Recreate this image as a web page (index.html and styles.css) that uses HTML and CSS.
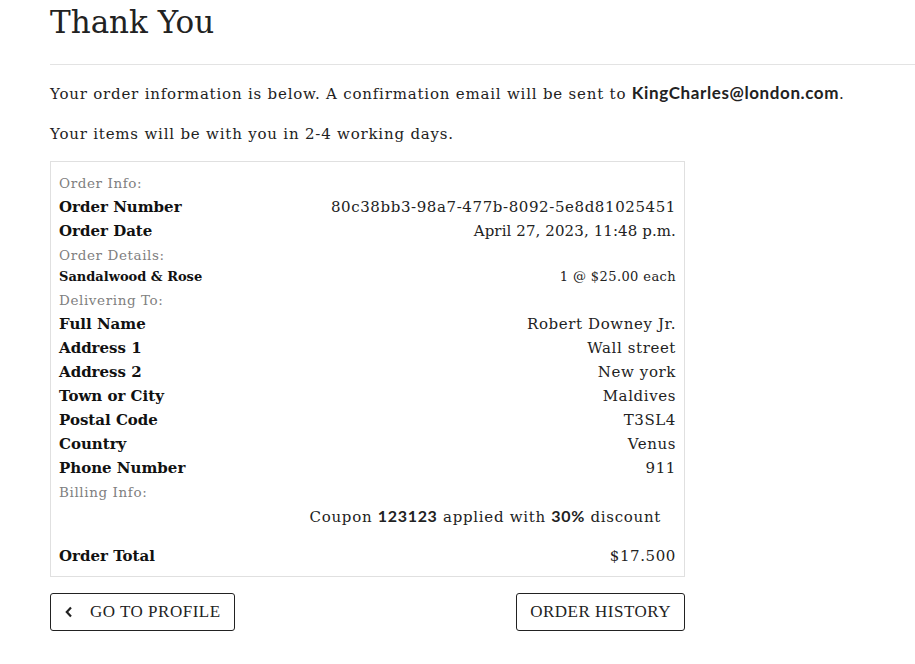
FILE: index.html
```html
<!DOCTYPE html>
<html lang="en">
<head>
<meta charset="utf-8">
<title>Thank You</title>
<link rel="stylesheet" href="styles.css">
</head>
<body>
<main class="page">
  <h1 class="title">Thank You</h1>
  <hr class="rule">
  <p class="lead">Your order information is below. A confirmation email will be sent to <strong>KingCharles@london.com</strong>.</p>
  <p class="lead">Your items will be with you in 2-4 working days.</p>

  <section class="order">
    <div class="section-label">Order Info:</div>
    <div class="row"><span class="label">Order Number</span><span class="value">80c38bb3-98a7-477b-8092-5e8d81025451</span></div>
    <div class="row"><span class="label">Order Date</span><span class="value value-date">April 27, 2023, 11:48 p.m.</span></div>

    <div class="section-label">Order Details:</div>
    <div class="row row-small"><span class="label">Sandalwood &amp; Rose</span><span class="value">1 @ $25.00 each</span></div>

    <div class="section-label">Delivering To:</div>
    <div class="row"><span class="label">Full Name</span><span class="value">Robert Downey Jr.</span></div>
    <div class="row"><span class="label">Address 1</span><span class="value">Wall street</span></div>
    <div class="row"><span class="label">Address 2</span><span class="value">New york</span></div>
    <div class="row"><span class="label">Town or City</span><span class="value">Maldives</span></div>
    <div class="row"><span class="label">Postal Code</span><span class="value">T3SL4</span></div>
    <div class="row"><span class="label">Country</span><span class="value">Venus</span></div>
    <div class="row"><span class="label">Phone Number</span><span class="value">911</span></div>

    <div class="section-label">Billing Info:</div>
    <div class="coupon">Coupon <strong>123123</strong> applied with <strong>30%</strong> discount</div>
    <div class="row row-total"><span class="label">Order Total</span><span class="value">$17.500</span></div>
  </section>

  <div class="actions">
    <a class="btn btn-back" href="#"><svg class="chev" width="10" height="12" viewBox="0 0 10 12"><path d="M7 1.5 L2.8 6 L7 10.5" fill="none" stroke="#222" stroke-width="2.2"/></svg><span>GO TO PROFILE</span></a>
    <a class="btn" href="#">ORDER HISTORY</a>
  </div>
</main>
</body>
</html>
```

FILE: styles.css
```css
html, body {
  margin: 0;
  padding: 0;
  background: #fff;
}
body {
  font-family: "DejaVu Serif", serif;
  color: #222;
  font-size: 15px;
}
.page {
  padding-left: 50px;
}
.title {
  font-family: "DejaVu Serif", serif;
  font-weight: normal;
  font-size: 31px;
  margin: 0;
  padding-top: 4px;
  line-height: 36px;
  color: #222;
}
.rule {
  border: 0;
  border-top: 1px solid #e3e3e3;
  margin: 24px 0 0 0;
}
.lead {
  margin: 17px 0 0 0;
  line-height: 22px;
  letter-spacing: 0.8px;
}
.lead + .lead {
  margin-top: 18px;
}
.lead strong {
  font-family: "Lato", sans-serif;
  font-weight: 700;
  font-size: 17px;
  letter-spacing: 0.6px;
}
.order {
  width: 617px;
  margin-top: 16px;
  border: 1px solid #e0e0e0;
  padding: 9px 8px 8px 8px;
}
.section-label {
  color: #808080;
  font-size: 13.5px;
  line-height: 24px;
  letter-spacing: 0.6px;
}
.row {
  display: flex;
  justify-content: space-between;
  align-items: baseline;
  line-height: 24px;
}
.label {
  font-weight: bold;
  font-size: 15px;
  color: #111;
}
.value {
  font-size: 15px;
  letter-spacing: 0.6px;
}
.value-date {
  letter-spacing: 0.1px;
}
.row-small {
  line-height: 18px;
  margin-top: 1px;
  margin-bottom: 2px;
}
.row-small .label {
  font-size: 13px;
}
.row-small .value {
  font-size: 13px;
  letter-spacing: 0.4px;
}
.coupon {
  text-align: right;
  padding-right: 15px;
  line-height: 24px;
  letter-spacing: 0.7px;
}
.coupon strong {
  font-family: "Lato", sans-serif;
  font-weight: 700;
  font-size: 16px;
}
.row-total {
  margin-top: 15px;
}
.actions {
  width: 635px;
  display: flex;
  justify-content: space-between;
  margin-top: 16px;
}
.btn {
  display: inline-flex;
  align-items: center;
  gap: 14px;
  height: 36px;
  padding: 0 13px;
  border: 1px solid #222;
  border-radius: 3px;
  color: #222;
  text-decoration: none;
  font-family: "Liberation Serif", serif;
  font-size: 17px;
  letter-spacing: 0.5px;
}
.btn-back {
  gap: 16px;
}
.chev {
  display: block;
}
```
